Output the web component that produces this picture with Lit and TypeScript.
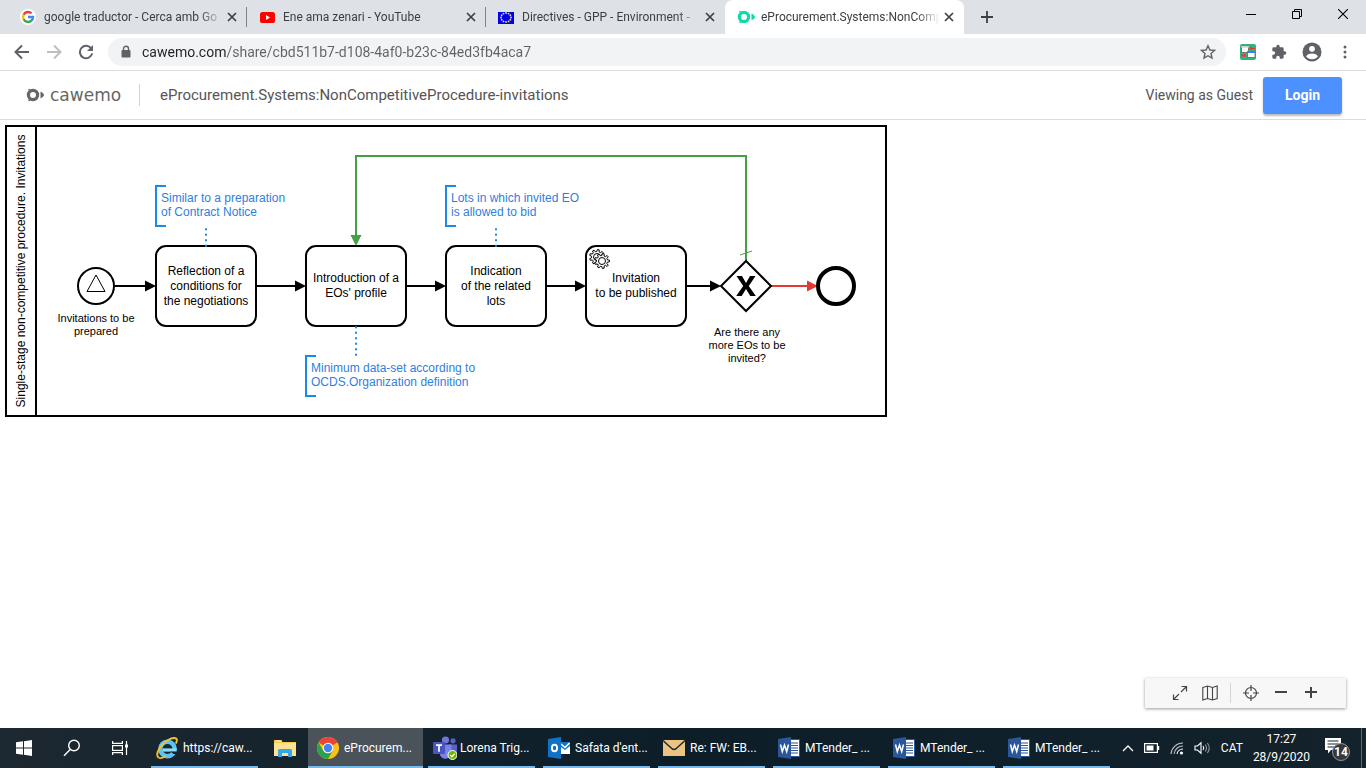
import { LitElement, html, svg, css } from "lit";
import { customElement } from "lit/decorators.js";

/* ---------- icons ---------- */

const googleIcon = html`<svg width="16" height="16" viewBox="0 0 16 16" fill="none" stroke-width="2.4">
  <circle cx="8" cy="8" r="8" fill="#fff" />
  <path d="M11.6 4.4A5 5 0 0 0 3.6 5.7" stroke="#ea4335" />
  <path d="M3.7 5.5a5 5 0 0 0 0 5" stroke="#fbbc05" />
  <path d="M3.6 10.3a5 5 0 0 0 7.8 1.4" stroke="#34a853" />
  <path d="M8 8h5a5 5 0 0 1-1.8 3.9" stroke="#4285f4" />
</svg>`;

const youtubeIcon = html`<svg width="16" height="16" viewBox="0 0 16 16">
  <rect x="1" y="3" width="15" height="11" rx="2.6" fill="#f00" />
  <path d="M7 6l4 2.4L7 11z" fill="#fff" />
</svg>`;

const stars = Array.from({ length: 12 }, (_, i) => {
  const a = (i * Math.PI) / 6;
  return { x: 8 + 5 * Math.cos(a), y: 8.5 + 4.5 * Math.sin(a) };
});

const euIcon = html`<svg width="16" height="16" viewBox="0 0 16 16">
  <rect y="3" width="16" height="12" fill="#00e" />
  ${stars.map((s) => svg`<circle cx=${s.x} cy=${s.y} r="0.9" fill="#f5e93a" />`)}
</svg>`;

const cawemoMark = (color: string) => html`<svg width="18" height="16" viewBox="0 0 18 16">
  <circle cx="7" cy="8" r="4.600" fill="none" stroke=${color} stroke-width="3.200" />
  <path d="M1.500 3.200L3 1.800l2 .6zM1.500 12.800L3 14.200l2-.6z" fill=${color} />
  <path d="M14.500 4.800c1.200 0 3.500 2.300 3.500 3.200s-2.300 3.200-3.500 3.200z" fill=${color} />
</svg>`;

const closeIcon = html`<svg width="10" height="10" viewBox="0 0 10 10" stroke="#3c4043" stroke-width="1.7">
  <path d="M1 1l8 8M9 1L1 9" />
</svg>`;

const line = (d: string, size: number, color = "#5f6368", width = 2) =>
  html`<svg width=${size} height=${size} viewBox="0 0 ${size} ${size}" fill="none" stroke=${color} stroke-width=${width}>
    <path d=${d} />
  </svg>`;

const reloadIcon = html`<svg width="16" height="16" viewBox="0 0 16 16">
  <path d="M13.300 4.600A6.200 6.200 0 1 0 14.200 9.400" fill="none" stroke="#5f6368" stroke-width="2" />
  <path d="M15 1v6H9z" fill="#5f6368" />
</svg>`;

const lockIcon = html`<svg width="10" height="14" viewBox="0 0 10 14">
  <rect x="0.500" y="5" width="9" height="7.500" rx="1" fill="#5f6368" />
  <path d="M2.500 5.500V3.800a2.500 2.500 0 0 1 5 0v1.700" fill="none" stroke="#5f6368" stroke-width="1.400" />
</svg>`;

const starIcon = html`<svg width="16" height="16" viewBox="0 0 16 16">
  <path d="M8 1.700l1.900 4.300 4.600.4-3.500 3.100 1 4.600L8 11.700l-4 2.400 1-4.600L1.500 6.400l4.600-.4z" fill="none" stroke="#5f6368" stroke-width="1.400" />
</svg>`;

const extensionIcon = html`<svg width="16" height="16" viewBox="0 0 16 16">
  <rect width="16" height="16" rx="2" fill="#2fb57c" />
  <rect x="1.500" y="2.500" width="7" height="6" fill="#fff" stroke="#777" />
  <path d="M1 2h8v1.600H1z" fill="#ccc" />
  <rect x="7.500" y="8" width="7.500" height="5.500" fill="#fff" stroke="#777" />
  <path d="M7 7h9v2H7z" fill="#3b7ff0" />
  <path d="M10.500 4.500h4.500M12 3l-1.500 1.500L12 6M1.500 11.500h4M4.500 10v3M2 10v3" stroke="#e03a3a" stroke-width="1.200" fill="none" />
</svg>`;

const puzzleIcon = html`<svg width="16" height="16" viewBox="0 0 24 24">
  <path fill="#5f6368" d="M20.500 11H19V7a2 2 0 0 0-2-2h-4V3.500a2.500 2.500 0 0 0-5 0V5H4a2 2 0 0 0-2 2v3.800h1.500a2.700 2.700 0 0 1 0 5.400H2V20a2 2 0 0 0 2 2h3.800v-1.500a2.700 2.700 0 0 1 5.400 0V22H17a2 2 0 0 0 2-2v-4h1.500a2.500 2.500 0 0 0 0-5z" />
</svg>`;

const profileIcon = html`<svg width="20" height="20" viewBox="0 0 20 20">
  <circle cx="10" cy="10" r="9.500" fill="#5f6368" />
  <circle cx="10" cy="6.800" r="2.900" fill="#fff" />
  <path d="M4 14.200c1.300-2 4-2.700 6-2.700s4.700.7 6 2.700a7.300 7.300 0 0 1-12 0z" fill="#fff" />
</svg>`;

const menuIcon = html`<svg width="16" height="16" viewBox="0 0 16 16" fill="#5f6368">
  <circle cx="8" cy="3" r="1.500" /><circle cx="8" cy="8" r="1.500" /><circle cx="8" cy="13" r="1.500" />
</svg>`;

const windowsIcon = html`<svg width="16" height="16" viewBox="0 0 16 16" fill="#fff">
  <path d="M0 2.300l7-1v6.200H0zM8 1.200L16 0v7.500H8zM0 8.500h7v6.200l-7-1zM8 8.500h8V16l-8-1.200z" />
</svg>`;

const searchIcon = html`<svg width="18" height="18" viewBox="0 0 18 18" fill="none" stroke="#fff" stroke-width="1.400">
  <circle cx="11" cy="6.500" r="5.300" /><path d="M7.200 10.500L1 16.700" />
</svg>`;

const taskViewIcon = html`<svg width="18" height="18" viewBox="0 0 18 18" fill="none" stroke="#fff" stroke-width="1.200">
  <path d="M1.600 2v2.400h9.800V2M1.600 16v-2.400h9.800V16" /><rect x="1.600" y="6.600" width="9.800" height="4.800" />
  <path d="M15.500 2v14" /><path d="M14 5.500h3v3h-3z" fill="#fff" stroke="none" />
</svg>`;

const ieIcon = html`<svg width="22" height="22" viewBox="0 0 22 22" fill="none">
  <circle cx="11.500" cy="12" r="7.200" stroke="#5cc4f4" stroke-width="4.400" />
  <path d="M6.500 13h14" stroke="#8bdcfb" stroke-width="3.200" />
  <path d="M14.500 14.600h8v2.300h-5z" fill="#15242f" />
  <path d="M2.500 20.500C-1.500 17 5 7 12 3c4.500-2.600 8.500-2.800 8.800-.2.200 1-.300 2.500-1 3.800" stroke="#f3c02c" stroke-width="1.900" />
  <path d="M2.500 20.500c1.500 1 4.500.2 7-1.500" stroke="#f3c02c" stroke-width="1.700" />
</svg>`;

const folderIcon = html`<svg width="22" height="20" viewBox="0 0 22 20">
  <path d="M0 2h7l1.500 2H22v14H0z" fill="#f5c94f" />
  <path d="M0 5h22v13H0z" fill="#fde293" /><path d="M2 2.500h6v1H2z" fill="#fff3c8" />
  <path d="M4 19v-6.500a1.500 1.500 0 0 1 1.500-1.500h11a1.500 1.500 0 0 1 1.500 1.500V19h-4v-4H8v4z" fill="#35a6e8" />
</svg>`;

const chromeIcon = html`<svg width="22" height="22" viewBox="0 0 22 22">
  <circle cx="11" cy="11" r="11" fill="#fbc116" />
  <path d="M11 11L1.500 5.500A11 11 0 0 1 20.500 5.500z" fill="#e8453c" />
  <path d="M11 0a11 11 0 0 1 9.500 5.500H11z" fill="#e8453c" />
  <path d="M1.500 5.500A11 11 0 0 0 11 22l4.700-8.300L6.300 13.700z" fill="#2ba24c" />
  <circle cx="11" cy="11" r="5.300" fill="#fff" /><circle cx="11" cy="11" r="4.200" fill="#4285f4" />
</svg>`;

const teamsIcon = html`<svg width="24" height="24" viewBox="0 0 24 24">
  <circle cx="12.500" cy="4" r="3.600" fill="#7177d5" /><circle cx="20" cy="4.800" r="2.600" fill="#5b62c4" />
  <path d="M16 8.500h8v7a4 4 0 0 1-6 3.500z" fill="#5b62c4" />
  <path d="M7 8.500h11.500v8a6 6 0 0 1-11.500 2.500z" fill="#7b83eb" />
  <rect y="6" width="12" height="12" rx="1" fill="#4b53bc" />
  <path d="M3 9.200h6M6 9.200v6.500" stroke="#fff" stroke-width="1.700" />
  <circle cx="19.500" cy="19" r="4.500" fill="#6bb700" stroke="#fff" stroke-width="1" />
  <path d="M17.300 19l1.600 1.700 2.900-3.100" stroke="#fff" fill="none" stroke-width="1.300" />
</svg>`;

const outlookIcon = html`<svg width="22" height="22" viewBox="0 0 22 22">
  <rect x="11" y="5" width="11" height="12" fill="#fff" />
  <path d="M13 5l9 0v4l-5 4-4-3z" fill="#1274c9" /><path d="M13 7l4 3.500L21.500 6" stroke="#fff" fill="none" stroke-width="1.600" />
  <path d="M0 2l13-2v22L0 20z" fill="#0f72c6" />
  <ellipse cx="6.500" cy="11" rx="2.600" ry="3.300" fill="none" stroke="#fff" stroke-width="1.900" />
</svg>`;

const mailIcon = html`<svg width="22" height="22" viewBox="0 0 22 22">
  <rect y="3" width="22" height="16" fill="#ecc381" />
  <path d="M0 3.500l9 8.200q2 1.600 4 0l9-8.200" fill="none" stroke="#1b2a35" stroke-width="1.500" />
</svg>`;

const wordIcon = html`<svg width="22" height="22" viewBox="0 0 22 22">
  <rect x="11" y="2.500" width="10.500" height="17" fill="#fff" stroke="#2b579a" />
  <path d="M13 6h7M13 8.500h7M13 11h7M13 13.500h7M13 16h7" stroke="#2b579a" stroke-width="1.200" />
  <path d="M0 2l13-2v22L0 20z" fill="#2b579a" />
  <path d="M2.500 7.500l1.800 7 2.200-6.500 2.200 6.500 1.800-7" fill="none" stroke="#fff" stroke-width="1.500" />
</svg>`;

const batteryIcon = html`<svg width="16" height="10" viewBox="0 0 16 10">
  <rect x="0.600" y="0.600" width="12.800" height="8.800" fill="none" stroke="#fff" stroke-width="1.200" />
  <path d="M2.500 2.500h7v5h-7zM14 3h1.200v4H14z" fill="#fff" />
</svg>`;

const wifiIcon = html`<svg width="14" height="14" viewBox="0 0 14 14" fill="none" stroke="#fff" stroke-width="1.100">
  <g stroke="#b8bfc4"><path d="M1 13A12 12 0 0 1 13 2" /><path d="M4 13a9 9 0 0 1 9-8" /></g>
  <path d="M7 13a6 6 0 0 1 6-5" /><circle cx="11.500" cy="12" r="1.600" fill="#fff" stroke="none" />
</svg>`;

const soundIcon = html`<svg width="17" height="14" viewBox="0 0 17 14" fill="none" stroke="#fff" stroke-width="1.100">
  <path d="M1 5h2.500L7 1.800v10.400L3.500 9H1z" /><path d="M9 5q1.500 2 0 4" />
  <g stroke="#8d979e"><path d="M11.200 3.500q2.600 3.500 0 7M13.400 2q3.700 5 0 10" /></g>
</svg>`;

const noticeIcon = html`<svg width="26" height="26" viewBox="0 0 26 26">
  <path d="M0 3h16v12H6l-3 3.500V15H0z" fill="#fff" />
  <path d="M2.500 6h11M2.500 9h11M2.500 12h7" stroke="#15242f" stroke-width="1.200" />
  <circle cx="16" cy="17" r="8.500" fill="#33383c" stroke="#91989d" />
  <text x="16" y="21" text-anchor="middle" font-size="12" font-weight="700" fill="#fff">14</text>
</svg>`;

/* ---------- process diagram ---------- */

const gear = (cx: number, cy: number) => {
  const pts: string[] = [];
  const teeth = 9;
  for (let i = 0; i < teeth; i++) {
    [[-0.3, 5.5], [-0.17, 7.5], [0.17, 7.5], [0.3, 5.5]].forEach(([o, r]) => {
      const a = ((i + o) / teeth) * Math.PI * 2;
      pts.push(`${(cx + r * Math.cos(a)).toFixed(2)},${(cy + r * Math.sin(a)).toFixed(2)}`);
    });
  }
  return svg`<polygon points=${pts.join(" ")} fill="#fff" stroke="#000" />
    <circle cx=${cx} cy=${cy} r="3.500" fill="#fff" stroke="#000" />`;
};

interface Label { x: number; y: number; lines: string[]; }

const tasks: Label[] = [
  { x: 156, y: 275, lines: ["Reflection of a", "conditions for", "the negotiations"] },
  { x: 306, y: 282, lines: ["Introduction of a", "EOs' profile"] },
  { x: 446, y: 275, lines: ["Indication", "of the related", "lots"] },
  { x: 586, y: 282, lines: ["Invitation", "to be published"] },
];

const notes: Label[] = [
  { x: 156, y: 186, lines: ["Similar to a preparation", "of Contract Notice"] },
  { x: 446, y: 186, lines: ["Lots in which invited EO", "is allowed to bid"] },
  { x: 306, y: 356, lines: ["Minimum data-set according to", "OCDS.Organization definition"] },
];

const captions: Label[] = [
  { x: 96, y: 322, lines: ["Invitations to be", "prepared"] },
  { x: 747, y: 336, lines: ["Are there any", "more EOs to be", "invited?"] },
];

const textLines = (l: string[], x: number, y: number, step: number) =>
  l.map((t, i) => svg`<text x=${x} y=${y + i * step}>${t}</text>`);

@customElement("process-diagram")
export class ProcessDiagram extends LitElement {
  static styles = css`
    :host { display: block; font-family: "Liberation Sans", Arial, sans-serif; }
    svg { display: block; }
    text { font-size: 12px; }
    .centered text { text-anchor: middle; }
    .caption text { font-size: 11px; text-anchor: middle; }
    .shape { fill: #fff; stroke: #000; stroke-width: 2; }
    .flow { fill: none; stroke: #000; stroke-width: 2; }
    .note path { fill: none; stroke: #1e88e5; stroke-width: 2; }
    .note text { fill: #2f80de; }
    .link { stroke: #1e88e5; stroke-width: 2; stroke-dasharray: 0.5 5; stroke-linecap: round; }
  `;

  render() {
    return html`<svg width="892" height="300" viewBox="0 120 892 300" role="img" aria-label="Process diagram">
      <rect class="shape" x="6" y="126" width="880" height="290" />
      <path class="flow" d="M36 126v290" />
      <g class="centered"><text transform="translate(25 271) rotate(-90)">Single-stage non-competitive procedure. Invitations</text></g>

      <path class="flow" d="M115 286h32M257 286h40M407 286h30M547 286h30M687 286h24" />
      ${[156, 306, 446, 586, 721].map((x) => svg`<path d="M${x} 286l-11 -5.500v11z" />`)}
      <path d="M746 261V156H356V237" fill="none" stroke="#43a047" stroke-width="2" />
      <path d="M356 246l-5.500-11h11z" fill="#43a047" />
      <path d="M740 255l12-4" stroke="#43a047" />
      <path d="M771 286h38" stroke="#e53935" stroke-width="2" />
      <path d="M818 286l-11-5.500v11z" fill="#e53935" />

      <circle class="shape" cx="96" cy="286" r="18" />
      <path d="M96 275l9 16.500H87z" fill="#fff" stroke="#000" />

      ${tasks.map((t) => svg`<g class="centered">
        <rect class="shape" x=${t.x} y="246" width="100" height="80" rx="10" />
        ${textLines(t.lines, t.x + 50, t.y, 15)}
      </g>`)}
      ${gear(597, 257)}${gear(602, 261)}

      <path class="shape" d="M746 261l25 25-25 25-25-25z" />
      <path d="M736.500 276h5.500l4 7 4-7h5.500l-6.700 10 7 10h-5.500l-4.300-7-4.300 7h-5.500l7-10z" />
      <circle cx="836" cy="286" r="18" fill="#fff" stroke="#000" stroke-width="4" />

      <path class="link" d="M206 246V226" />
      <path class="link" d="M496 246V226" />
      <path class="link" d="M356 327V356" />
      ${notes.map((n) => svg`<g class="note">
        <path d="M${n.x + 10} ${n.y}h-10v40h10" />
        ${textLines(n.lines, n.x + 5, n.y + 16, 14)}
      </g>`)}
      ${captions.map((c) => svg`<g class="caption">${textLines(c.lines, c.x, c.y, 13)}</g>`)}
    </svg>`;
  }
}

/* ---------- page ---------- */

const tabs = [
  { icon: googleIcon, title: "google traductor - Cerca amb Go", active: false },
  { icon: youtubeIcon, title: "Ene ama zenari - YouTube", active: false },
  { icon: euIcon, title: "Directives - GPP - Environment -", active: false },
  { icon: cawemoMark("#0fd9a8"), title: "eProcurement.Systems:NonComp", active: true },
];

const apps = [
  { icon: teamsIcon, title: "Lorena Trig..." },
  { icon: outlookIcon, title: "Safata d'ent..." },
  { icon: mailIcon, title: "Re: FW: EB..." },
  { icon: wordIcon, title: "MTender_ ..." },
  { icon: wordIcon, title: "MTender_ ..." },
  { icon: wordIcon, title: "MTender_ ..." },
];

@customElement("app-root")
export class AppRoot extends LitElement {
  static styles = css`
    :host { display: flex; flex-direction: column; min-height: 100vh; background: #fff; font: 12px Roboto, sans-serif; color: #3c4043; }
    * { box-sizing: border-box; }
    button { border: 0; padding: 0; margin: 0; background: none; font: inherit; color: inherit; display: flex; align-items: center; justify-content: center; }
    svg { display: block; flex: none; }

    .tabs { display: flex; height: 34px; background: #dee1e6; padding-left: 8px; }
    .tab { display: flex; align-items: center; flex: 0 1 239px; min-width: 0; padding: 0 10px 0 12px; gap: 4px; position: relative; }
    .tab:not(.active):not(.last)::after { content: ""; position: absolute; right: 0; top: 7px; width: 1px; height: 20px; background: #808488; }
    .tab.active { background: #fff; border-radius: 8px 8px 0 0; }
    .tab-name { flex: 1; min-width: 0; justify-content: flex-start; overflow: hidden; white-space: nowrap; line-height: 18px;
      -webkit-mask-image: linear-gradient(to right, #000 calc(100% - 24px), transparent); }
    .favicon { width: 16px; margin-right: 4px; display: flex; }
    .new-tab { width: 46px; }
    .window { display: flex; margin-left: auto; }
    .window button { width: 46px; padding-bottom: 6px; }

    .bar { display: flex; align-items: center; height: 37px; padding: 0 13px 1px 14px; border-bottom: 1px solid #dcdcdc; }
    .nav { display: flex; gap: 16px; }
    .address { display: flex; align-items: center; flex: 1; height: 28px; margin: 0 14px; padding: 0 10px 0 13px; border-radius: 14px; background: #f1f3f4; }
    .address input { flex: 1; min-width: 0; height: 24px; margin-left: 6px; border: 0; padding: 0 5px; outline: 0; font: 14px Roboto, sans-serif;
      color: #5f6368; -webkit-text-fill-color: transparent; background: linear-gradient(to right, #202124 90px, #5f6368 90px); -webkit-background-clip: text; background-clip: text; }
    .tools { display: flex; align-items: center; gap: 15px; }

    .header { display: flex; align-items: center; height: 49px; padding: 0 24px 0 26px; border-bottom: 1px solid #dcdcdc; color: #555; }
    .logo { display: flex; align-items: center; gap: 6px; color: #666; font: 17px/22px "DejaVu Sans", sans-serif; text-decoration: none; }
    .title { margin: 0 0 0 18px; padding-left: 20px; border-left: 1px solid #d3d3d3; font: 400 15px/22px Roboto, sans-serif; color: #555; }
    .guest { margin-left: auto; font-size: 14px; }
    .login { width: 79px; height: 37px; margin-left: 10px; border-radius: 3px; background: #4d90ff; color: #fff; font-weight: 700; font-size: 14px; box-shadow: 0 2px 2px #0004; }

    .canvas { flex: 1; position: relative; overflow: hidden; }
    .zoom { position: absolute; right: 20px; bottom: 20px; display: flex; align-items: center; height: 30px; padding: 0 20px; background: #f7f7f7; box-shadow: 0 1px 3px #0006; }
    .zoom button { width: 30px; height: 30px; }
    .rule { width: 1px; height: 20px; margin: 0 5px; background: #d5d5d5; }

    .taskbar { display: flex; height: 40px; color: #fff; background: linear-gradient(to right, #1d2831, #13222c 30%, #0d1e29 50%, #13222b); }
    .icon { width: 48px; }
    .explorer { width: 46px; }
    .app { flex: 0 1 115px; min-width: 0; justify-content: flex-start; gap: 5px; padding-left: 9px; position: relative; white-space: nowrap; overflow: hidden; }
    .app .glyph { width: 22px; display: flex; }
    .app::after { content: ""; position: absolute; left: 4px; right: 4px; bottom: 0; height: 2px; background: #76b9ed; }
    .app.first { margin-left: 3px; }
    .app.current { background: #4a535a; margin-right: 1px; }
    .app.current::after { left: 0; right: 0; }
    .tray { display: flex; align-items: center; gap: 10px; margin-left: auto; padding-right: 4px; }
    .clock { text-align: center; line-height: 18px; margin-right: 5px; }
    .end { width: 1px; height: 40px; background: #5c666d; }
  `;

  render() {
    return html`
      <nav class="tabs" aria-label="Tabs">
        ${tabs.map((t, i) => html`<div class="tab ${t.active ? "active" : ""} ${i === 2 ? "last" : ""}">
          <span class="favicon">${t.icon}</span>
          <button class="tab-name">${t.title}</button>
          <button aria-label="Close tab">${closeIcon}</button>
        </div>`)}
        <button class="new-tab" aria-label="New tab">${line("M6 0v12M0 6h12", 12, "#3c4043", 1.8)}</button>
        <div class="window">
          <button aria-label="Minimize">${line("M0 5.500h10", 10, "#000", 1)}</button>
          <button aria-label="Restore">${line("M.5 2.500h7v7h-7zM2.500 2.500v-2h7v7h-2", 10, "#000", 1)}</button>
          <button aria-label="Close">${line("M0 0l10 10M10 0L0 10", 10, "#000", 1.1)}</button>
        </div>
      </nav>

      <div class="bar">
        <div class="nav">
          <button aria-label="Back">${line("M15 8H2M8 1.500L1.500 8 8 14.500", 16)}</button>
          <button aria-label="Forward">${line("M1 8h13M8 1.500L14.500 8 8 14.500", 16, "#bcbec1")}</button>
          <button aria-label="Reload">${reloadIcon}</button>
        </div>
        <div class="address">
          ${lockIcon}
          <input type="text" aria-label="Address" value="cawemo.com/share/cbd511b7-d108-4af0-b23c-84ed3fb4aca7" />
          <button aria-label="Bookmark">${starIcon}</button>
        </div>
        <div class="tools">
          <button aria-label="Extension">${extensionIcon}</button>
          <button aria-label="Extensions">${puzzleIcon}</button>
          <button aria-label="Profile">${profileIcon}</button>
          <button aria-label="Menu">${menuIcon}</button>
        </div>
      </div>

      <header class="header">
        <a class="logo" href="#">${cawemoMark("#666")}<span>cawemo</span></a>
        <h1 class="title">eProcurement.Systems:NonCompetitiveProcedure-invitations</h1>
        <span class="guest">Viewing as Guest</span>
        <button class="login">Login</button>
      </header>

      <main class="canvas">
        <process-diagram></process-diagram>
        <div class="zoom">
          <button aria-label="Fullscreen">${line("M9 7l5-5M9.500 1.500h5v5M7 9l-5 5M1.500 9.500v5h5", 16, "#444", 1.2)}</button>
          <button aria-label="Minimap">${line("M.8 2.500l4.700-1.500 5 1.500 4.700-1.500v12.500l-4.700 1.500-5-1.500-4.700 1.500zM5.500 1v12.500M10.500 2.500V15", 16, "#444", 1.1)}</button>
          <span class="rule"></span>
          <button aria-label="Reset view">${line("M8 2.500a5.500 5.500 0 1 0 0 11a5.500 5.500 0 0 0 0-11M8 0v6M8 10v6M0 8h6M10 8h6", 16, "#444", 1.2)}</button>
          <button aria-label="Zoom out">${line("M0 5h12", 12, "#444", 2)}</button>
          <button aria-label="Zoom in">${line("M0 5h12M6 -1v12", 12, "#444", 2)}</button>
        </div>
      </main>

      <footer class="taskbar">
        <button class="icon" aria-label="Start">${windowsIcon}</button>
        <button class="icon" aria-label="Search">${searchIcon}</button>
        <button class="icon" aria-label="Task view">${taskViewIcon}</button>
        <button class="app first"><span class="glyph">${ieIcon}</span>https://caw...</button>
        <button class="explorer" aria-label="File Explorer">${folderIcon}</button>
        <button class="app current"><span class="glyph">${chromeIcon}</span>eProcurem...</button>
        ${apps.map((a) => html`<button class="app"><span class="glyph">${a.icon}</span>${a.title}</button>`)}
        <div class="tray">
          <button aria-label="Hidden icons">${line("M1 9l5-5 5 5", 12, "#fff", 1.3)}</button>
          ${batteryIcon}${wifiIcon}${soundIcon}
          <span>CAT</span>
          <div class="clock"><div>17:27</div><div>28/9/2020</div></div>
          <button aria-label="Notifications">${noticeIcon}</button>
          <span class="end"></span>
        </div>
      </footer>
    `;
  }
}
